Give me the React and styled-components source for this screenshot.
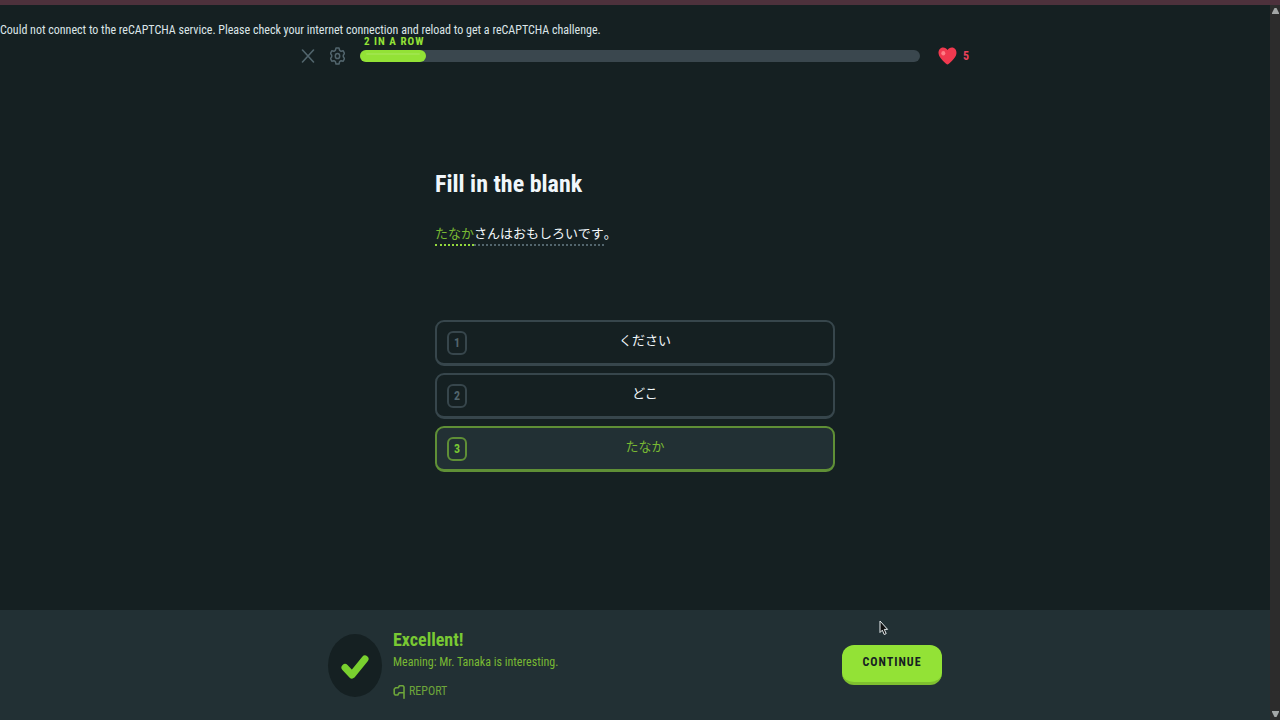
import React from "react";
import styled, { createGlobalStyle } from "styled-components";

const Global = createGlobalStyle`
  *, *::before, *::after { box-sizing: border-box; }
  body {
    margin: 0;
    background: #152022;
    color: #f1f7fb;
    font-family: "Roboto Condensed", Roboto, "Noto Sans CJK JP", sans-serif;
    font-size: 12px;
    line-height: 16px;
  }
  button { font: inherit; color: inherit; margin: 0; cursor: pointer; }
`;

const Page = styled.div`
  min-height: 100vh;
  display: flex;
  flex-direction: column;
`;

const TopStrip = styled.div`
  height: 5px;
  background: #4d313c;
`;

const Frame = styled.div`
  flex: 1;
  display: flex;
`;

const Lesson = styled.div`
  flex: 1;
  min-width: 0;
  display: flex;
  flex-direction: column;
`;

const ScrollTrack = styled.div`
  width: 10px;
  background: #2c2c2c;
  display: flex;
  flex-direction: column;
  justify-content: space-between;
  align-items: center;
  padding: 3px 0;
`;

const Notice = styled.p`
  margin: 17px 0 0;
  color: #dce5e8;
`;

const Header = styled.header`
  width: 100%;
  max-width: 668px;
  height: 36px;
  margin: 0 auto;
  display: flex;
  align-items: center;
`;

const IconButton = styled.button`
  display: flex;
  padding: 0;
  border: 0;
  background: none;
  color: #52656d;
  margin-right: 15px;
`;

const Track = styled.div`
  position: relative;
  flex: 1;
  height: 12px;
  border-radius: 6px;
  background: #3a474e;
`;

const Fill = styled.div`
  height: 12px;
  padding: 3px 6px;
  border-radius: 6px;
  background: #93e236;
  &::before {
    content: "";
    display: block;
    height: 2px;
    border-radius: 1px;
    background: #9ee54a;
  }
`;

const Streak = styled.span`
  position: absolute;
  left: 4px;
  bottom: 14px;
  color: #93e236;
  font-size: 11px;
  line-height: 12px;
  font-weight: 700;
  letter-spacing: 1px;
  white-space: nowrap;
`;

const Hearts = styled.div`
  display: flex;
  align-items: center;
  gap: 6px;
  margin-left: 18px;
  color: #e8415a;
  font-weight: 700;
`;

const Exercise = styled.main`
  flex: 1;
  width: 100%;
  max-width: 400px;
  margin: 0 auto;
  padding: 94px 0 32px;
`;

const Title = styled.h1`
  margin: 0;
  font-size: 24px;
  line-height: 32px;
  font-weight: 700;
`;

const Sentence = styled.p`
  margin: 24px 0 74px;
  font-size: 13px;
  line-height: 20px;
`;

const Word = styled.span`
  display: inline-block;
  height: 22px;
  color: ${(p) => (p.$known ? "#79b933" : "inherit")};
  border-bottom: 2px dotted ${(p) => (p.$known ? "#93d83c" : "#52656d")};
`;

const Choices = styled.div`
  display: grid;
  gap: 7px;
`;

const Choice = styled.button`
  width: 100%;
  height: 46px;
  display: flex;
  align-items: center;
  padding: 0 10px;
  border: 2px solid ${(p) => (p.$selected ? "#5f8f36" : "#37464c")};
  border-bottom-width: 3px;
  border-radius: 9px;
  background: ${(p) => (p.$selected ? "#223034" : "transparent")};
  color: ${(p) => (p.$selected ? "#79b933" : "#f1f7fb")};
`;

const Key = styled.span`
  width: 20px;
  height: 24px;
  display: flex;
  align-items: center;
  justify-content: center;
  border: 2px solid ${(p) => (p.$selected ? "#5f8f36" : "#37464c")};
  border-radius: 6px;
  color: ${(p) => (p.$selected ? "#79c933" : "#52656d")};
  font-weight: 700;
`;

const ChoiceText = styled.span`
  flex: 1;
  padding-bottom: 4px;
  font-size: 13px;
  line-height: 20px;
`;

const Footer = styled.footer`
  background: #223034;
`;

const FooterInner = styled.div`
  width: 100%;
  max-width: 614px;
  min-height: 110px;
  margin: 0 auto;
  display: flex;
  align-items: center;
`;

const Badge = styled.div`
  width: 54px;
  height: 63px;
  padding-top: 3px;
  border-radius: 50%;
  background: #152022;
  display: flex;
  align-items: center;
  justify-content: center;
`;

const Feedback = styled.div`
  flex: 1;
  margin-left: 11px;
  padding-bottom: 3px;
  color: #79b933;
`;

const Praise = styled.h2`
  margin: 0;
  font-size: 18px;
  line-height: 24px;
  color: #79c933;
`;

const Meaning = styled.p`
  margin: 2px 0 13px;
`;

const Report = styled.button`
  display: flex;
  align-items: center;
  gap: 4px;
  padding: 0;
  border: 0;
  background: none;
  color: #6da53a;
`;

const Continue = styled.button`
  width: 100px;
  height: 40px;
  padding: 0 0 3px;
  border: 0;
  border-bottom: 3px solid #7fc02f;
  border-radius: 12px;
  background: #93e236;
  color: #152022;
  font-weight: 700;
  letter-spacing: 1px;
`;

const Pointer = styled.svg`
  position: absolute;
  left: 879px;
  top: 620px;
  pointer-events: none;
`;

const options = ["ください", "どこ", "たなか"];

export default function App() {
  const selected = 2;
  return (
    <Page>
      <Global />
      <TopStrip />
      <Frame>
        <Lesson>
          <Notice role="alert">
            Could not connect to the reCAPTCHA service. Please check your internet connection and reload to get a
            reCAPTCHA challenge.
          </Notice>
          <Header>
            <IconButton aria-label="Close">
              <svg width="14" height="14" viewBox="0 0 14 14" fill="none" stroke="currentColor" strokeWidth="1.6" strokeLinecap="round">
                <path d="M1.5 1 12.5 13M12.5 1 1.5 13" />
              </svg>
            </IconButton>
            <IconButton aria-label="Settings">
              <svg width="15" height="18" viewBox="0 0 15 18" fill="none" stroke="currentColor" strokeWidth="1.5" strokeLinejoin="round">
                <path d="M6 1h3l.6 2.300 1.500 1 2.100-.6 1.300 2.800-1.200 1.700v1.600l1.200 1.700-1.300 2.800-2.100-.6-1.500 1L9 17H6l-.6-2.300-1.500-1-2.100.6L.5 11.500l1.200-1.700V8.200L.5 6.500l1.300-2.800 2.100.6 1.500-1z" />
                <ellipse cx="7.500" cy="9" rx="2.200" ry="2.600" />
              </svg>
            </IconButton>
            <Track role="progressbar" aria-label="Lesson progress" aria-valuenow={12}>
              <Fill style={{ width: "11.8%" }} />
              <Streak>2 IN A ROW</Streak>
            </Track>
            <Hearts>
              <svg width="19" height="18" viewBox="0 0 19 18">
                <path d="M9.500 17.500C8.700 17.500 1 11.200.6 6.800.1 3 2.400.6 5.100.6c2 0 3.500 1 4.400 2.400C10.400 1.600 12 .6 13.900.6c2.700 0 5 2.400 4.500 6.200-.4 4.400-8.100 10.700-8.900 10.700z" fill="#f0394f" />
                <ellipse cx="5.300" cy="6.200" rx="2" ry="2.300" fill="#ff7d85" />
              </svg>
              <span>5</span>
            </Hearts>
          </Header>
          <Exercise>
            <Title>Fill in the blank</Title>
            <Sentence lang="ja">
              <Word $known>たなか</Word>
              <Word>さんはおもしろいです</Word>。
            </Sentence>
            <Choices>
              {options.map((text, i) => (
                <Choice key={text} $selected={i === selected} aria-pressed={i === selected}>
                  <Key $selected={i === selected}>{i + 1}</Key>
                  <ChoiceText lang="ja">{text}</ChoiceText>
                </Choice>
              ))}
            </Choices>
          </Exercise>
          <Footer>
            <FooterInner>
              <Badge>
                <svg width="28" height="26" viewBox="0 0 28 26" fill="none" stroke="#79d02f" strokeWidth="7" strokeLinecap="round" strokeLinejoin="round">
                  <path d="M4 13.500 11 21 24 5" />
                </svg>
              </Badge>
              <Feedback>
                <Praise>Excellent!</Praise>
                <Meaning>Meaning: Mr. Tanaka is interesting.</Meaning>
                <Report>
                  <svg width="12" height="16" viewBox="0 0 12 16" fill="none" stroke="currentColor" strokeWidth="1.600" strokeLinecap="round" strokeLinejoin="round">
                    <path d="M11 15.200V4L10 2.800H6.500L5.200 4.800H2.500L1.200 6.300V10.700L2.200 12H4.800L6 9.800H10.500" />
                  </svg>
                  REPORT
                </Report>
              </Feedback>
              <Continue>CONTINUE</Continue>
            </FooterInner>
          </Footer>
        </Lesson>
        <ScrollTrack aria-hidden="true">
          <svg width="7" height="6" viewBox="0 0 7 6"><path d="M2.500 0h2L7 5v1H0V5z" fill="#a3a6a6" /></svg>
          <svg width="7" height="6" viewBox="0 0 7 6"><path d="M2.500 6h2L7 1V0H0v1z" fill="#a3a6a6" /></svg>
        </ScrollTrack>
      </Frame>
      <Pointer width="10" height="16" viewBox="0 0 10 16" aria-hidden="true">
        <path d="M1 1v11.500l2.300-2.300 1.900 4.300 2-.9-1.900-4.200H8.600z" fill="#111" stroke="#e8eef0" strokeWidth="1" />
      </Pointer>
    </Page>
  );
}
